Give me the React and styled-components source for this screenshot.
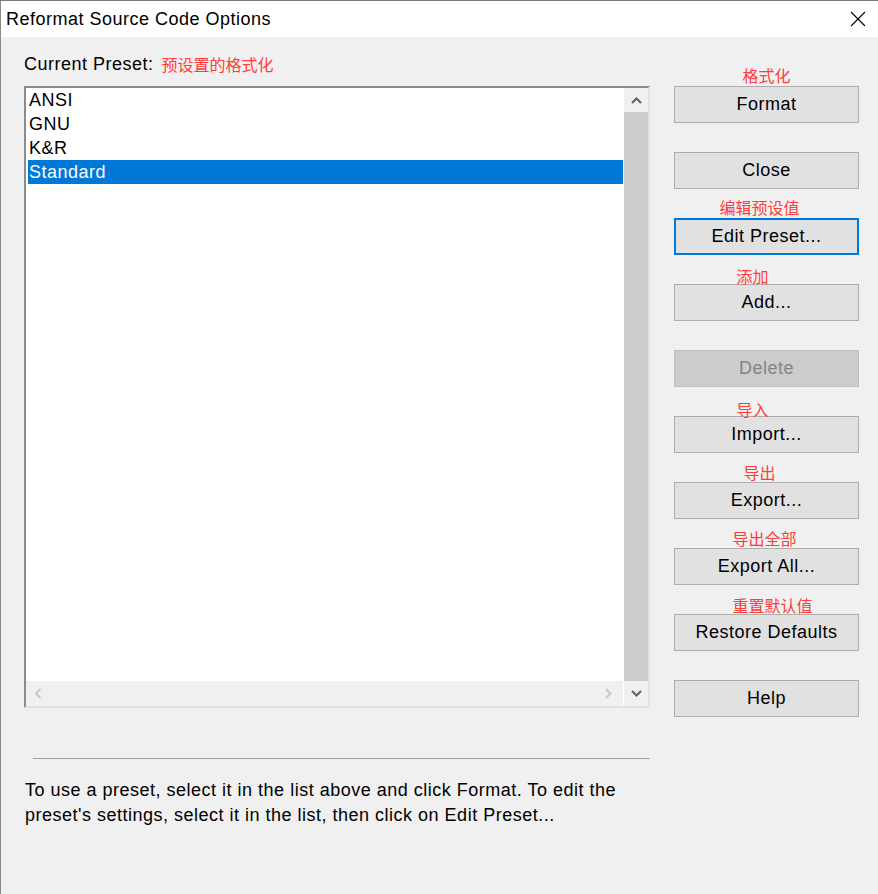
import React from "react"
import styled, { createGlobalStyle } from "styled-components"

const GlobalStyle = createGlobalStyle`
  html, body {
    margin: 0;
    padding: 0;
    background: #f0f0f0;
  }
  body {
    font-family: "Liberation Sans", Arial, sans-serif;
    letter-spacing: 0.5px;
  }
`

const Window = styled.div`
  width: 878px;
  height: 894px;
  box-sizing: border-box;
  border-top: 1px solid #7a7a7a;
  border-left: 1px solid #8a8a8a;
  background: #f0f0f0;
  display: flex;
  flex-direction: column;
  overflow: hidden;
`

const TitleBar = styled.div`
  height: 36px;
  background: #fff;
  display: flex;
  align-items: center;
  justify-content: space-between;
  padding: 0 12px 0 5px;
  font-size: 18px;
  color: #000;
`

const CloseIcon = styled.svg`
  width: 16px;
  height: 16px;
  display: block;
`

const Body = styled.div`
  display: flex;
  gap: 24px;
  padding: 15px 0 0 23px;
`

const LeftColumn = styled.div`
  width: 626px;
  display: flex;
  flex-direction: column;
`

const PresetLabel = styled.div`
  height: 24px;
  display: flex;
  align-items: center;
  gap: 8px;
  font-size: 18px;
  color: #000;
  margin-bottom: 10px;
`

const Note = styled.span`
  font-family: "Noto Sans CJK SC", sans-serif;
  font-size: 16px;
  line-height: 16px;
  letter-spacing: 0;
  color: #fe3c3c;
  white-space: nowrap;
`

const ListBox = styled.div`
  height: 622px;
  box-sizing: border-box;
  background: #fff;
  border-top: 2px solid #8c8c8c;
  border-left: 2px solid #8c8c8c;
  border-right: 2px solid #e3e3e3;
  border-bottom: 2px solid #e3e3e3;
  display: grid;
  grid-template-columns: 1fr 24px;
  grid-template-rows: 1fr 25px;
`

const Items = styled.div`
  padding-left: 2px;
  padding-right: 1px;
`

const Item = styled.div`
  height: 24px;
  line-height: 24px;
  padding-left: 1px;
  font-size: 18px;
  color: ${p => (p.$selected ? "#fff" : "#000")};
  background: ${p => (p.$selected ? "#0078d7" : "transparent")};
`

const VScroll = styled.div`
  grid-row: 1 / 3;
  grid-column: 2;
  display: flex;
  flex-direction: column;
  background: #f0f0f0;
`

const ArrowBox = styled.div`
  height: ${p => p.$h}px;
  display: flex;
  align-items: center;
  justify-content: center;
  flex: none;
`

const Thumb = styled.div`
  flex: 1;
  background: #cdcdcd;
`

const HScroll = styled.div`
  grid-row: 2;
  grid-column: 1;
  background: #f0f0f0;
  border-right: 1px solid #fff;
  display: flex;
  align-items: center;
  justify-content: space-between;
  padding: 0 10px 0 8px;
`

const Separator = styled.div`
  height: 1px;
  background: #a0a0a0;
  margin: 50px 0 0 9px;
`

const HelpText = styled.p`
  margin: 19px 0 0 1px;
  font-size: 18px;
  line-height: 25px;
  color: #000;
  white-space: nowrap;
`

const RightColumn = styled.div`
  display: flex;
  flex-direction: column;
  gap: 29px;
  padding-top: 34px;
`

const Slot = styled.div`
  position: relative;
  width: 185px;
`

const SlotNote = styled(Note)`
  position: absolute;
  left: 50%;
  bottom: calc(100% + ${p => p.$dy - 8}px);
  transform: translateX(calc(-50% + ${p => p.$dx}px));
`

const Button = styled.div`
  height: 37px;
  box-sizing: border-box;
  display: flex;
  align-items: center;
  justify-content: center;
  font-size: 18px;
  border: ${p => (p.$focused ? "2px solid #0078d7" : `1px solid ${p.$disabled ? "#bfbfbf" : "#adadad"}`)};
  background: ${p => (p.$disabled ? "#cccccc" : "#e1e1e1")};
  color: ${p => (p.$disabled ? "#838383" : "#000")};
`

const Chevron = ({ dir, color }) => {
  const paths = {
    up: "M1 7 L5.5 2.5 L10 7",
    down: "M1 2 L5.5 6.5 L10 2",
    left: "M6.5 1 L2 5.5 L6.5 10",
    right: "M2 1 L6.5 5.5 L2 10",
  }
  const horiz = dir === "left" || dir === "right"
  return (
    <svg width={horiz ? 9 : 11} height={horiz ? 11 : 9} viewBox={horiz ? "0 0 9 11" : "0 0 11 9"}>
      <path d={paths[dir]} fill="none" stroke={color} strokeWidth="2" />
    </svg>
  )
}

const presets = ["ANSI", "GNU", "K&R", "Standard"]

const buttons = [
  { label: "Format", note: "格式化", dx: 0, dy: 11 },
  { label: "Close" },
  { label: "Edit Preset...", note: "编辑预设值", dx: -7, dy: 11, focused: true },
  { label: "Add...", note: "添加", dx: -14, dy: 8 },
  { label: "Delete", disabled: true },
  { label: "Import...", note: "导入", dx: -14, dy: 7 },
  { label: "Export...", note: "导出", dx: -7, dy: 10 },
  { label: "Export All...", note: "导出全部", dx: -2, dy: 10 },
  { label: "Restore Defaults", note: "重置默认值", dx: 6, dy: 9 },
  { label: "Help" },
]

const App = () => {
  return (
    <>
      <GlobalStyle />
      <Window>
        <TitleBar>
          <span>Reformat Source Code Options</span>
          <CloseIcon viewBox="0 0 16 16">
            <path d="M1 1 L15 15 M15 1 L1 15" stroke="#000" strokeWidth="1.1" />
          </CloseIcon>
        </TitleBar>
        <Body>
          <LeftColumn>
            <PresetLabel>
              <span>Current Preset:</span>
              <Note>预设置的格式化</Note>
            </PresetLabel>
            {/* preset list */}
            <ListBox>
              <Items>
                {presets.map(name => (
                  <Item key={name} $selected={name === "Standard"}>{name}</Item>
                ))}
              </Items>
              <VScroll>
                <ArrowBox $h={24}><Chevron dir="up" color="#606060" /></ArrowBox>
                <Thumb />
                <ArrowBox $h={25}><Chevron dir="down" color="#606060" /></ArrowBox>
              </VScroll>
              <HScroll>
                <Chevron dir="left" color="#c8c8c8" />
                <Chevron dir="right" color="#c8c8c8" />
              </HScroll>
            </ListBox>
            <Separator />
            <HelpText>
              To use a preset, select it in the list above and click Format. To edit the
              <br />
              preset's settings, select it in the list, then click on Edit Preset...
            </HelpText>
          </LeftColumn>
          <RightColumn>
            {buttons.map(b => (
              <Slot key={b.label}>
                {b.note && <SlotNote $dx={b.dx} $dy={b.dy}>{b.note}</SlotNote>}
                <Button $focused={b.focused} $disabled={b.disabled}>{b.label}</Button>
              </Slot>
            ))}
          </RightColumn>
        </Body>
      </Window>
    </>
  )
}

export default App
